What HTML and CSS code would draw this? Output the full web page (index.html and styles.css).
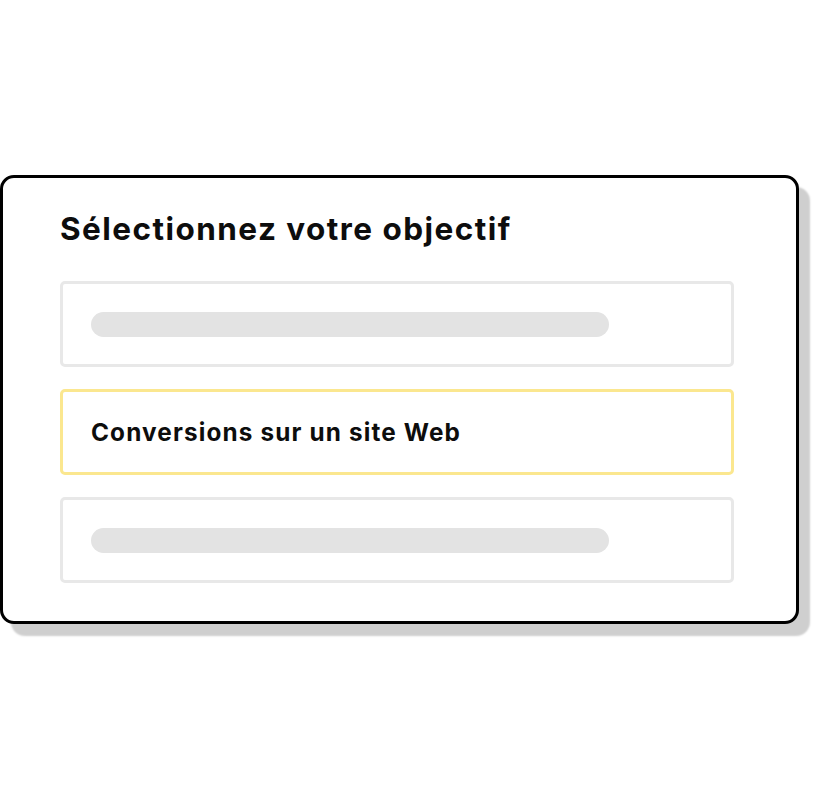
FILE: index.html
```html
<!DOCTYPE html>
<html>
<head>
<meta charset="utf-8">
<link rel="stylesheet" href="styles.css">
</head>
<body>
<div class="stage">
  <div class="card">
    <h1 class="title">Sélectionnez votre objectif</h1>
    <div class="options">
      <div class="option"><span class="placeholder"></span></div>
      <div class="option selected">Conversions sur un site Web</div>
      <div class="option"><span class="placeholder"></span></div>
    </div>
  </div>
</div>
</body>
</html>
```
FILE: styles.css
```css
html, body {
  margin: 0;
  padding: 0;
  background: #ffffff;
}
body {
  width: 814px;
  height: 800px;
  font-family: Inter, "Liberation Sans", sans-serif;
  color: #0d0d0d;
}
.stage {
  padding-top: 175px;
}
.card {
  box-sizing: border-box;
  width: 799px;
  height: 449px;
  border: 3px solid #000;
  border-radius: 14px;
  background: #fff;
  box-shadow: 11px 12px 2px 0 #cfcfcf;
  padding: 0 62px 0 57px;
  display: flex;
  flex-direction: column;
}
.title {
  margin: 27px 0 0 0;
  font-size: 31.5px;
  line-height: 48px;
  font-weight: 700;
  letter-spacing: 1.45px;
}
.options {
  margin-top: 28px;
  display: flex;
  flex-direction: column;
  gap: 22px;
}
.option {
  box-sizing: border-box;
  height: 86px;
  border: 3px solid #e8e8e8;
  border-radius: 5px;
  display: flex;
  align-items: center;
  padding-left: 28px;
  font-size: 24.3px;
  font-weight: 700;
  letter-spacing: 1.15px;
}
.option.selected {
  border-color: #fbe78f;
}
.placeholder {
  display: block;
  width: 518px;
  height: 25px;
  border-radius: 13px;
  background: #e3e3e3;
}
```
